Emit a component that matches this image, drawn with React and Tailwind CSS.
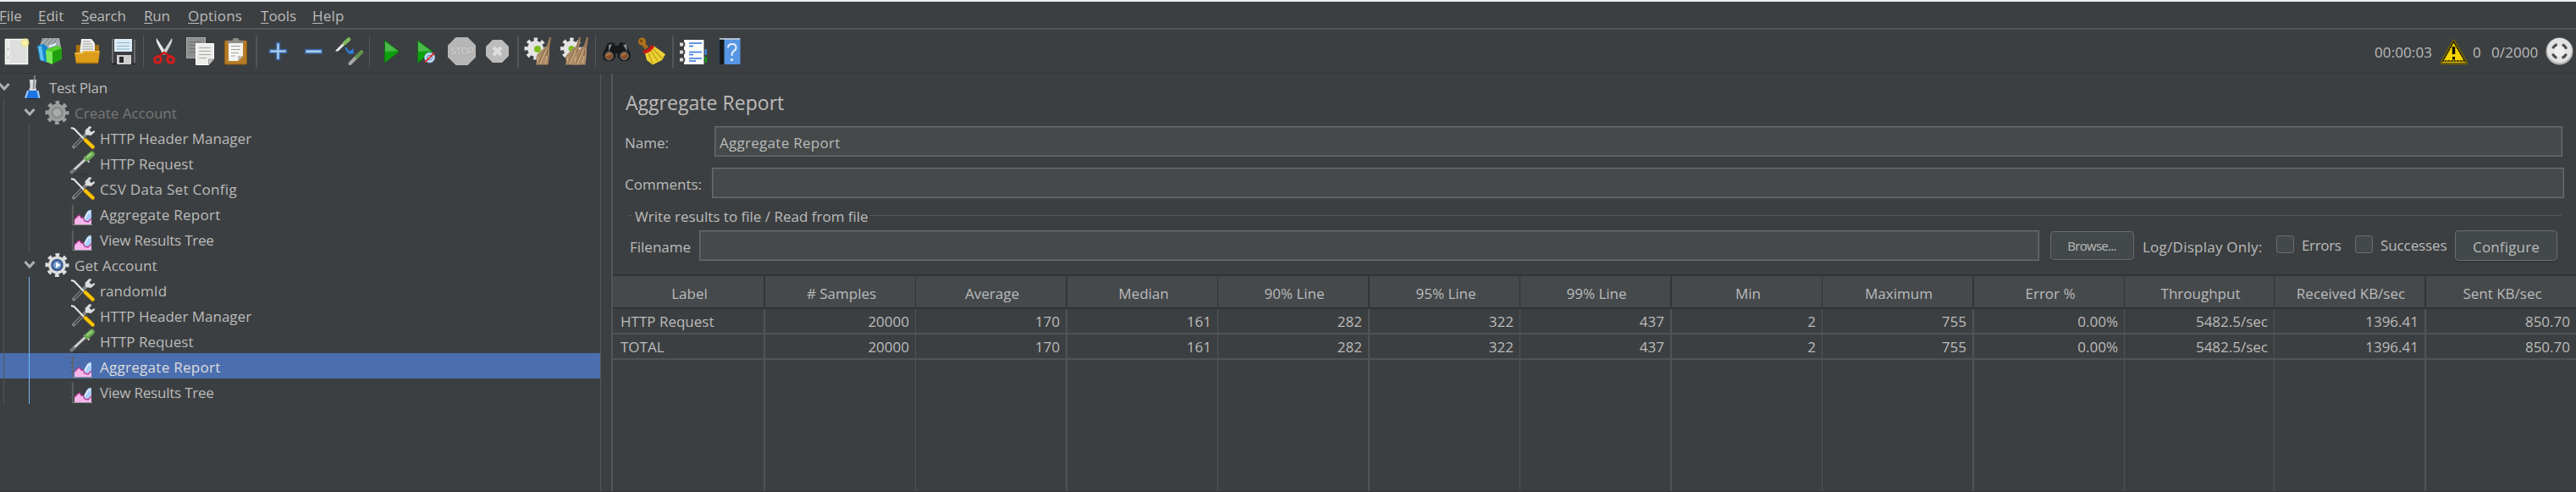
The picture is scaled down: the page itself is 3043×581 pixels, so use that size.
import React from 'react';

const MENUS = [
  { key: 'F', rest: 'ile', cls: 'w-[46px] -ml-px' },
  { key: 'E', rest: 'dit', cls: 'w-[51px]' },
  { key: 'S', rest: 'earch', cls: 'w-[74px] tracking-[-0.2px]' },
  { key: 'R', rest: 'un', cls: 'w-[52px] tracking-[-0.2px]' },
  { key: 'O', rest: 'ptions', cls: 'w-[86px] tracking-[0.2px]' },
  { key: 'T', rest: 'ools', cls: 'w-[61px]' },
  { key: 'H', rest: 'elp', cls: 'tracking-[0.2px]' },
];

function Icon({ x, w, cls = '', children }) {
  return (
    <svg className={`h-[33px] shrink-0 overflow-visible ${cls}`} width={w} height={33} viewBox={`${x} 44 ${w} 33`} fill="none">
      {children}
    </svg>
  );
}

function Sep({ cls }) {
  return <div className={`h-[38px] shrink-0 bg-[#555555] ${cls}`} />;
}

function Gear({ cx, cy, r = 11.5, body = '#e4e4e4' }) {
  const seg = (2 * Math.PI * r) / 16;
  return (
    <g>
      <circle cx={cx} cy={cy} r={r} stroke={body} strokeWidth="5" strokeDasharray={`${seg} ${seg}`} strokeDashoffset={seg / 2} />
      <circle cx={cx} cy={cy} r={r - 1} fill={body} />
    </g>
  );
}

function Broom({ x }) {
  return (
    <g>
      <path d={`M${x + 20} 44 l2 .5 l-2 11 v8 l-1.500 13 h-14.500 l1 -5 l-1 -2 l1.500 -5 l8 -8 l3 -2z`} fill="#a98a66" />
      <path d={`M${x + 20.500} 45 l-3 11 M${x + 15} 58 l-7 16 M${x + 18} 59 l-3 16`} stroke="#806041" strokeWidth="1" />
      <path d={`M${x + 16} 59 l-7 16 M${x + 7} 67 l-1 6 M${x + 17} 66 l-2 9`} stroke="#d2b083" strokeWidth="1.2" />
    </g>
  );
}

function Toolbar() {
  return (
    <div className="flex h-[51px] items-center">
      <Icon x={6} w={30} cls="ml-[6px]">
        <rect x="6.500" y="46.500" width="26" height="29" fill="#dedede" stroke="#fafaf5" strokeWidth="1.500" />
        <path d="M10 48 v26" stroke="#efefef" strokeWidth="3" />
        <path d="M9.500 57 v2 M9.500 67 v2" stroke="#9c9c9c" />
        <circle cx="29.500" cy="50.500" r="5" fill="#f0e68c" opacity=".8" />
        <circle cx="29.500" cy="50.500" r="2.600" fill="#fff6a8" />
      </Icon>
      <Icon x={44} w={30} cls="ml-[8px]">
        <path d="M47 54 l3 -9 h20 l2 11 -4 4 H48z" fill="#a4adb2" />
        <path d="M49 49 l4 -4 m-2 8 l7 -8 m-2 8 l7 -8 m-2 8 l6 -7" stroke="#747b80" />
        <path d="M44 54 l7 -2 5 3 v19 l-9 -3z" fill="#1685cf" />
        <path d="M45 55 l4 -1 3 18 -4 -1z" fill="#62c0f2" />
        <path d="M54 59 l14 -5 5 3 v13 l-12 6 -6 -3z" fill="#1fa010" />
        <path d="M54 59 l8 2 v15 l-7 -3z" fill="#7ee85c" />
        <path d="M54 59 l14 -5 5 3 -11 4z" fill="#55d02c" />
        <path d="M58 55 l8 -3" stroke="#dff6ff" strokeWidth="2" />
      </Icon>
      <Icon x={88} w={31} cls="ml-[14px]">
        <path d="M90 53 h27 v10 H90z" fill="#a96f0b" />
        <path d="M96 46 h12 l4 5 v14 H94z" fill="#f0f0ee" />
        <path d="M98 49 h9 M98 52 h11 M97 55 h13 M97 58 h13" stroke="#9b9b9b" />
        <path d="M88 62 l9 0 2 -2 h19 l-2 15 H90z" fill="#dd9d1b" />
        <path d="M89 63 l9 0 2 -2 h17" stroke="#f4cc66" />
        <path d="M90 74.500 h26" stroke="#a66c0a" strokeWidth="1.500" />
      </Icon>
      <Icon x={130} w={31} cls="ml-[11px]">
        <path d="M133 46 h25 l2 2 v28 h-29 v-28z" fill="#3b3d40" />
        <path d="M133 46 v29 M159 47 v28" stroke="#7a7c80" strokeWidth="1.500" />
        <path d="M131 75.500 h29" stroke="#1d1e20" strokeWidth="1.500" />
        <rect x="135" y="46" width="21" height="15" fill="#dcebf5" />
        <path d="M138 50.500 h15 M138 54.500 h15 M138 58 h15" stroke="#8fb3cc" strokeWidth="1.200" />
        <rect x="138" y="65" width="17" height="11" fill="#cfcfcf" />
        <rect x="141" y="67" width="5" height="7" fill="#2a2b2d" />
      </Icon>
      <Sep cls="ml-[8px] w-px" />
      <Icon x={181} w={27} cls="ml-[11px]">
        <path d="M185 45 c-1 3 0 5 2 9 l6 11 3 -3z" fill="#e9e9e9" />
        <path d="M203 45 c1 3 0 5 -2 9 l-6 11 -3 -3z" fill="#d2d2d2" />
        <ellipse cx="186.500" cy="70.500" rx="4" ry="3.600" stroke="#d81b1b" strokeWidth="3" transform="rotate(-35 186.500 70.500)" />
        <ellipse cx="201.500" cy="70.500" rx="4" ry="3.600" stroke="#d81b1b" strokeWidth="3" transform="rotate(35 201.500 70.500)" />
        <path d="M188 66 l6 -4 6 4" stroke="#c51616" strokeWidth="2.500" />
      </Icon>
      <Icon x={220} w={34} cls="ml-[12px]">
        <rect x="220.500" y="44.500" width="22" height="24" fill="#8f9191" stroke="#a8aaaa" />
        <path d="M224 49.500 h14 M224 53.500 h14 M224 57.500 h8 M224 61.500 h8" stroke="#6d6f70" />
        <path d="M231.500 51.500 h21 v18 l-6 7 h-15z" fill="#ececea" stroke="#fff" />
        <path d="M235 56.500 h14 M235 60.500 h14 M235 64.500 h14 M235 68.500 h9" stroke="#a9a9a9" />
        <path d="M246.500 76 v-6 h6z" fill="#c4c4c4" stroke="#888" strokeWidth=".7" />
      </Icon>
      <Icon x={265} w={28} cls="ml-[11px]">
        <rect x="265.500" y="48" width="26" height="28" rx="1" fill="#b67b26" stroke="#8b5a14" />
        <path d="M270 49 h17 v17 l-6 6 h-11z" fill="#f4f4f2" />
        <path d="M273 54.500 h11 M273 58.500 h11 M273 62.500 h9 M273 66 h5" stroke="#a0a0a0" />
        <path d="M281 72 v-6 h6z" fill="#bcbcbc" />
        <path d="M269 51 v-3 h5 l2 -3 h5 l2 3 h5 v3z" fill="#8c8e88" />
      </Icon>
      <Sep cls="ml-[9px] w-[2px]" />
      <Icon x={318} w={22} cls="ml-[14px]">
        <path d="M326.500 50.500 h4 v8 h8 v4 h-8 v8 h-4 v-8 h-8 v-4 h8z" fill="#a9cbee" stroke="#3465a4" strokeWidth="1.500" />
      </Icon>
      <Icon x={360} w={21} cls="ml-[20px]">
        <rect x="360.700" y="58.500" width="19.500" height="4.500" fill="#a9cbee" stroke="#3465a4" strokeWidth="1.500" />
      </Icon>
      <Icon x={396} w={33} cls="ml-[15px]">
        <path d="M398 60 L408 50" stroke="#e8e8e8" strokeWidth="3" strokeLinecap="round" />
        <path d="M407 51 L412 46.500" stroke="#7fb95f" strokeWidth="4.500" strokeLinecap="round" />
        <path d="M397 61 h10" stroke="#2b2d2e" />
        <path d="M408.500 56 q1 5 6 5.500" stroke="#2f7fea" strokeWidth="2" />
        <path d="M417.500 57 v6.500 h-7z" fill="#2f7fea" />
        <path d="M413.500 75 L422 66.500" stroke="#a6a8a6" strokeWidth="4" strokeLinecap="round" />
        <path d="M421.500 67 L427 61.500" stroke="#62924c" strokeWidth="4.500" strokeLinecap="round" />
      </Icon>
      <Sep cls="ml-[7px] w-px" />
      <Icon x={453} w={20} cls="ml-[16px]">
        <path d="M454.500 48 L471.500 60.800 L454.500 74z" fill="#0fa010" stroke="#0b7a10" />
        <path d="M455 49 L470 60 L455 61z" fill="#5fc25c" opacity=".75" />
      </Icon>
      <Icon x={493} w={22} cls="ml-[20px]">
        <path d="M493.500 48 L511 60.800 L493.500 74z" fill="#0fa010" stroke="#0b7a10" />
        <path d="M494 49 L509 60 L494 61z" fill="#5fc25c" opacity=".75" />
        <circle cx="507.500" cy="68" r="6" fill="#cfe0f3" stroke="#7ea6d6" />
        <circle cx="507.500" cy="68" r="3" stroke="#4a78b5" />
        <path d="M502 73.500 L513 62.500" stroke="#dc2626" strokeWidth="1.800" />
      </Icon>
      <div className="ml-[14px] grid h-[33px] w-[33px] shrink-0 place-items-center">
        <svg className="col-start-1 row-start-1" width="33" height="33" viewBox="0 0 33 33">
          <path d="M9.500 0 h14 l9.500 9.500 v14 l-9.500 9.500 h-14 l-9.500 -9.500 v-14z" fill="#b6b6b6" />
        </svg>
        <span className="col-start-1 row-start-1 font-['Liberation_Sans_Narrow','Liberation_Sans',sans-serif] text-[11px] leading-[15px] font-bold tracking-[-0.6px] text-[#cdcdcd] [text-shadow:0_0_1px_#8c8c8c]">STOP</span>
      </div>
      <Icon x={574} w={27} cls="ml-[12px]">
        <path d="M582 47 h11 l8 8 v11 l-8 8 h-11 l-8 -8 v-11z" fill="#bcbcbc" />
        <path d="M583 56 l9 9 m0 -9 l-9 9" stroke="#dedede" strokeWidth="4" />
      </Icon>
      <Sep cls="ml-[10px] w-[2px]" />
      <Icon x={619} w={33} cls="ml-[6px]">
        <Gear cx={632.5} cy={57.5} r={10.5} />
        <circle cx="635" cy="58" r="4" fill="#7dbb1d" />
        <Broom x={629} />
      </Icon>
      <Icon x={661} w={35} cls="ml-[9px]">
        <Gear cx={675} cy={57.5} r={10.5} />
        <circle cx="675" cy="57.500" r="3.500" fill="#7dbb1d" />
        <Broom x={664} />
        <Broom x={673} />
      </Icon>
      <Sep cls="ml-[7px] w-px" />
      <Icon x={711} w={35} cls="ml-[7px]">
        <path d="M718 51 l6 -1 3 4 h3 l3 -4 6 1 6 13 -1 6 -4 2 h-6 l-4 -4 v-5 h-3 v5 l-4 4 h-6 l-4 -2 -1 -6z" fill="#17191a" />
        <path d="M719 53 l4 -1 -4 9z M736 53 l4 -1 1 9z" fill="#87898b" />
        <circle cx="719.500" cy="66" r="4.700" fill="#84502b" stroke="#77797b" />
        <circle cx="737.500" cy="66" r="4.700" fill="#84502b" stroke="#77797b" />
        <path d="M717 66 a3 3 0 0 1 4 -2 M735 66 a3 3 0 0 1 4 -2" stroke="#c58452" strokeWidth="1.500" />
      </Icon>
      <Icon x={753} w={33} cls="ml-[7px]">
        <path d="M758 49 L764 57" stroke="#a8691b" strokeWidth="5" />
        <circle cx="758.500" cy="49" r="4.500" fill="#b0711f" />
        <circle cx="757.500" cy="48.500" r="1.700" fill="#7b4a0c" />
        <path d="M762 63 L772 54 L786 64 L782 71 L771 76.500 L764 71z" fill="#ecd136" />
        <path d="M766 63 l5 12 M769 60 l8 12 M772 58 l10 11" stroke="#bd9b12" strokeWidth="1.200" />
        <path d="M760 61.500 Q767 61 771.500 54" stroke="#cf1717" strokeWidth="4" />
      </Icon>
      <Sep cls="ml-[8px] w-[2px]" />
      <Icon x={803} w={33} cls="ml-[7px]">
        <rect x="830" y="58" width="5" height="7" fill="#3f84d8" />
        <rect x="830" y="67" width="5" height="7" fill="#139a13" />
        <rect x="808" y="47" width="24" height="29" fill="#fbfbfb" />
        <path d="M832 47 v29" stroke="#333" />
        <path d="M814 51 h15 M814 54.500 h5 M814 61.500 h15 M814 64.500 h5 M814 69 h15 M814 72 h8" stroke="#3273d9" strokeWidth="1.700" />
        <path d="M803 52.500 h7 M803 61.500 h7 M803 70.500 h7" stroke="#d9d9d9" strokeWidth="4" />
        <path d="M808 50 v5 M808 59 v5 M808 68 v5" stroke="#232425" strokeWidth="1.500" />
      </Icon>
      <Icon x={849} w={26} cls="ml-[13px]">
        <rect x="849.500" y="45" width="25" height="31" fill="#5796e4" />
        <rect x="849.500" y="46" width="6" height="30" fill="#17191c" />
        <path d="M850 46 h24" stroke="#cfd2d6" strokeWidth="1.500" />
        <path d="M860 56.500 q0 -4.500 5 -4.500 q4.500 0 4.500 4 q0 3 -3 4.500 q-2 1.500 -2 5.500" stroke="#e5effb" strokeWidth="2" />
        <circle cx="864.500" cy="70.500" r="1.600" fill="#e5effb" />
      </Icon>

      <div className="ml-auto flex h-[51px] items-center">
        <span className="w-[77px] pt-[2px] tracking-[0.1px]">00:00:03</span>
        <Icon x={2882} w={34}>
          <path d="M2898.500 47.500 L2913.500 73 V75 H2884 V73z" fill="#f8d400" stroke="#6d5f0a" strokeWidth="2.500" strokeLinejoin="round" />
          <path d="M2898.500 49.500 L2911.500 72 H2886z" stroke="#17150a" strokeWidth="1.300" strokeDasharray="3 .6" />
          <path d="M2898.500 55 v9" stroke="#0d0d05" strokeWidth="3.500" />
          <path d="M2898.500 67 v3.500" stroke="#0d0d05" strokeWidth="3" />
        </Icon>
        <span className="w-[22px] pl-[5px] pt-[2px]">0</span>
        <span className="w-[69px] pl-[5px] pt-[2px] tracking-[0.1px]">0/2000</span>
        <Icon x={3007} w={33} cls="mr-[3px]">
          <circle cx="3023.500" cy="60.500" r="16" fill="#b4b4b4" />
          <circle cx="3023.500" cy="59.500" r="14.500" fill="#e3e3e3" />
          <circle cx="3023.500" cy="60.500" r="8.500" stroke="#4a4c4d" strokeWidth="3" strokeDasharray="7 6.352" strokeDashoffset="-3.176" />
          <circle cx="3023.500" cy="60.500" r="6.500" fill="#efefef" />
        </Icon>
      </div>
    </div>
  );
}

function Chevron({ cls }) {
  return (
    <svg className={`shrink-0 ${cls}`} width="14" height="30" viewBox="0 0 14 30" fill="none">
      <path d="M1.500 12 L7 18 L12.500 12" stroke="#afb1b3" strokeWidth="3" />
    </svg>
  );
}

function TreeIcon({ kind }) {
  if (kind === 'flask')
    return (
      <svg className="ml-[16px] shrink-0" width="22" height="30" viewBox="28 87 22 30" fill="none">
        <path d="M28 116 h20" stroke="#1e2021" strokeWidth="1.500" />
        <path d="M35 94 h8 l-1 9 l4.500 13 h-16 l5 -13z" fill="#d9dcdf" />
        <path d="M41 89 l-1.500 16" stroke="#85888b" strokeWidth="1.800" />
        <path d="M33 107 h12 l2 9 h-17z" fill="#1b74e0" />
        <path d="M33 107 l-3 9 M44.500 107 l2 9" stroke="#9ec3f5" strokeWidth="2.200" />
      </svg>
    );
  if (kind === 'gear' || kind === 'gear-off') {
    const on = kind === 'gear';
    return (
      <svg className="ml-[11px] shrink-0" width="30" height="30" viewBox="53 117 30 30" fill="none">
        <Gear cx={67.500} cy={133} body={on ? '#dcdcdc' : '#9d9f9f'} />
        <circle cx="67.500" cy="133" r="6" fill={on ? '#7b9bc9' : '#a9abab'} stroke={on ? '#375a92' : '#8b8d8d'} strokeWidth="2.500" />
        {on && <path d="M66 129.500 l5.500 3.500 -5.500 3.500z" fill="#fff" />}
      </svg>
    );
  }
  if (kind === 'tools')
    return (
      <svg className="ml-[47px] shrink-0" width="32" height="30" viewBox="82 147 32 30" fill="none">
        <path d="M87 173.500 L104 156" stroke="#7f8280" strokeWidth="4" strokeLinecap="round" />
        <path d="M88 172.500 L97 163" stroke="#34373a" strokeWidth="1.300" />
        <path d="M101 159 l-0.500 -5 5 -5 3 1 -3 3.500 2.500 2.500 3.500 -2 .5 2 -4.500 4z" fill="#dcdcdc" />
        <path d="M84 151 l3.500 1 L99 164" stroke="#e8e8e8" strokeWidth="2" />
        <path d="M101 165.500 L109.500 173.500" stroke="#c08a00" strokeWidth="5" strokeLinecap="round" />
        <path d="M101 165.500 L109.500 173.500" stroke="#fcc808" strokeWidth="3.500" strokeLinecap="round" />
      </svg>
    );
  if (kind === 'dropper')
    return (
      <svg className="ml-[47px] shrink-0" width="32" height="30" viewBox="82 177 32 30" fill="none">
        <path d="M86 206 h18" stroke="#303334" strokeWidth="1.200" />
        <path d="M84.500 203.500 L101 188" stroke="#77797a" strokeWidth="4" strokeLinecap="round" />
        <path d="M88 200 L102 187" stroke="#e2e2e2" strokeWidth="1.800" />
        <path d="M99.500 185.500 l6 6" stroke="#d5d5d5" strokeWidth="2" />
        <path d="M103 187 L108.500 182" stroke="#68a552" strokeWidth="6.500" strokeLinecap="round" />
        <path d="M103 185.500 L108 181.500" stroke="#96cf7a" strokeWidth="2.500" strokeLinecap="round" />
      </svg>
    );
  return (
    <svg className="ml-[47px] shrink-0" width="32" height="30" viewBox="82 237 32 30" fill="none">
      <path d="M86 241.500 v24" stroke="#66696b" strokeWidth="1.500" />
      <path d="M83.500 242.500 h3 M83.500 248 h3 M83.500 253.500 h3 M83.500 259 h3" stroke="#505355" />
      <path d="M98 262 L100 255 L103 250 L105 248 H108 V265 H98z" fill="#a9cdf6" />
      <path d="M100 258 l4 -7 h3" stroke="#e8f3ff" strokeWidth="1.500" />
      <path d="M88 265 v-6 l4 -4 2 -1 2 3 2 0 2 4 4 1 4 -4 v7z" fill="#f6b6ec" />
      <path d="M88 259 l4 -4 2 -1 2 3 2 0 2 4 4 1 4 -4" stroke="#b8378c" strokeWidth="1.300" />
      <path d="M86 265.500 h23" stroke="#8d8f91" />
    </svg>
  );
}

const TREE = [
  { level: 0, kind: 'flask', label: 'Test Plan', cls: 'pl-[8px] tracking-[-0.35px]' },
  { level: 1, kind: 'gear-off', label: 'Create Account', cls: 'pl-[5px] text-[#777777]' },
  { level: 2, kind: 'tools', label: 'HTTP Header Manager', cls: '' },
  { level: 2, kind: 'dropper', label: 'HTTP Request', cls: '' },
  { level: 2, kind: 'tools', label: 'CSV Data Set Config', cls: 'tracking-[0.3px]' },
  { level: 2, kind: 'chart', label: 'Aggregate Report', cls: 'tracking-[0.28px]' },
  { level: 2, kind: 'chart', label: 'View Results Tree', cls: 'tracking-[-0.22px]' },
  { level: 1, kind: 'gear', label: 'Get Account', cls: 'pl-[5px] tracking-[0.1px]' },
  { level: 2, kind: 'tools', label: 'randomId', cls: 'tracking-[0.1px]', active: true },
  { level: 2, kind: 'tools', label: 'HTTP Header Manager', cls: '', active: true },
  { level: 2, kind: 'dropper', label: 'HTTP Request', cls: '', active: true },
  { level: 2, kind: 'chart', label: 'Aggregate Report', cls: 'tracking-[0.28px] text-[#dddddd]', active: true, selected: true },
  { level: 2, kind: 'chart', label: 'View Results Tree', cls: 'tracking-[-0.22px]', active: true },
];

function Tree() {
  return (
    <div className="w-[710px] shrink-0 border-r border-[#555555]">
      {TREE.map((n, i) => (
        <div key={i} className={`flex h-[30px] ${n.selected ? 'bg-[#4b6eaf]' : ''}`}>
          {n.level === 0 && <Chevron cls="-ml-[2px]" />}
          {n.level > 0 && <div className="ml-[4px] w-px bg-[#515355]" />}
          {n.level === 1 && <Chevron cls="ml-[23px]" />}
          {n.level === 2 && <div className={`ml-[29px] w-px ${n.active ? 'bg-[#6fb5fa]' : 'bg-[#515355]'}`} />}
          <TreeIcon kind={n.kind} />
          <span className={`pt-[3px] leading-[27px] ${n.level === 2 ? 'pl-[4px]' : ''} ${n.cls}`}>{n.label}</span>
        </div>
      ))}
    </div>
  );
}

function Field({ cls, children }) {
  return (
    <div className={`flex h-[36px] items-center border border-[#6a6b6c] bg-[#45494a] shadow-[inset_0_0_0_1px_#545758] ${cls}`}>
      {children}
    </div>
  );
}

function Check() {
  return <div className="-mt-[3px] h-[21px] w-[21px] shrink-0 rounded-[3px] border border-[#6b6b6b] bg-[#43494a]" />;
}

function Form() {
  return (
    <div className="pl-[14px]">
      <h1 className="flex h-[62px] items-center pl-[1px] pt-[6px] text-[23px] tracking-[0.03px]">Aggregate Report</h1>
      <div className="flex h-[36px] items-center">
        <label className="w-[106px] pt-[3px]">Name:</label>
        <Field cls="w-[2183px] pl-[5px]">
          <span className="pt-[3px] tracking-[0.28px]">Aggregate Report</span>
        </Field>
      </div>
      <div className="mt-[13px] flex h-[36px] items-center">
        <label className="w-[103px] pt-[3px]">Comments:</label>
        <Field cls="w-[2188px]" />
      </div>
      <div className="flex h-[38px] items-center pl-[4px]">
        <div className="mt-[3px] h-px w-[4px] bg-[#555759]" />
        <span className="pl-[4px] pt-[5px]">Write results to file / Read from file</span>
        <div className="ml-[1px] mt-[3px] mr-[17px] h-px flex-1 bg-[#555759]" />
      </div>
      <div className="flex h-[36px] items-center pl-[6px]">
        <label className="w-[82px] pt-[3px]">Filename</label>
        <Field cls="w-[1583px]" />
        <button className="ml-[13px] h-[34px] w-[99px] rounded-[4px] border border-[#6b6b6b] bg-[#43494a] pr-[1px] pt-[1px] text-[15px] tracking-[-0.7px] shadow-[0_1px_0_#333637]">Browse...</button>
        <span className="ml-[10px] w-[158px] pt-[3px] tracking-[0.25px]">Log/Display Only:</span>
        <Check />
        <span className="-mt-[1px] w-[72px] pl-[9px] tracking-[-0.35px]">Errors</span>
        <Check />
        <span className="-mt-[1px] w-[97px] pl-[9px] tracking-[-0.1px]">Successes</span>
        <button className="h-[36px] w-[121px] rounded-[4px] border border-[#6b6b6b] bg-[#43494a] pt-[3px] tracking-[0.15px] shadow-[0_2px_0_#333637]">Configure</button>
      </div>
    </div>
  );
}

const COLUMNS = ['Label', '# Samples', 'Average', 'Median', '90% Line', '95% Line', '99% Line', 'Min', 'Maximum', 'Error %', 'Throughput', 'Received KB/sec', 'Sent KB/sec'];
const VALUES = ['20000', '170', '161', '282', '322', '437', '2', '755', '0.00%', '5482.5/sec', '1396.41', '850.70'];
const ROWS = [['HTTP Request', ...VALUES], ['TOTAL', ...VALUES]];
const GRID = 'grid grid-cols-[180px_178px_179px_178px_179px_178px_179px_178px_179px_178px_177px_179px_177px]';
const WIDE_EDGES = [0, 2, 4, 6, 8, 11];

function edge(i) {
  if (i === 12) return '';
  return WIDE_EDGES.includes(i) ? 'border-r-2' : 'border-r';
}

function Table() {
  return (
    <div className="mt-[16px] flex flex-1 flex-col">
      <div className={`${GRID} h-[41px] shrink-0 border-y-2 border-[#323537] bg-[#45494b]`}>
        {COLUMNS.map((c, i) => (
          <div key={c} className={`flex items-center justify-center border-[#323537] pl-[3px] pt-[4px] ${edge(i)}`}>
            {c}
          </div>
        ))}
      </div>
      {ROWS.map((row) => (
        <div key={row[0]} className={`${GRID} h-[30px] shrink-0`}>
          {row.map((v, i) => (
            <div
              key={i}
              className={`flex items-center border-[#505254] pt-[1px] shadow-[inset_0_-2px_0_#505254] pb-[2px] ${i === 0 ? 'pl-[9px]' : 'justify-end pr-[7px]'} ${edge(i)}`}
            >
              {v}
            </div>
          ))}
        </div>
      ))}
      <div className={`${GRID} flex-1`}>
        {COLUMNS.map((c, i) => (
          <div key={c} className={`border-[#505254] ${edge(i)}`} />
        ))}
      </div>
    </div>
  );
}

export default function App() {
  return (
    <div className="flex h-[581px] w-[3043px] flex-col overflow-hidden whitespace-nowrap border-b border-t-2 border-b-[#3a3639] border-t-[#f0f0f0] bg-[#3c3f41] font-['Open_Sans','Noto_Sans',sans-serif] text-[17px] leading-[23px] text-[#bbbbbb]">
      <nav className="flex h-[33px] shrink-0 items-center border-b-2 border-[#555555] pt-[2px]">
        {MENUS.map((m) => (
          <span key={m.key} className={m.cls}>
            <span className="underline decoration-1 underline-offset-[2px]">{m.key}</span>
            {m.rest}
          </span>
        ))}
      </nav>
      <Toolbar />
      <div className="h-px shrink-0 bg-[#323436]" />
      <div className="flex min-h-0 flex-1">
        <Tree />
        <div className="ml-[12px] w-[2px] shrink-0 bg-[#555555]" />
        <div className="flex flex-1 flex-col">
          <Form />
          <Table />
        </div>
      </div>
    </div>
  );
}
